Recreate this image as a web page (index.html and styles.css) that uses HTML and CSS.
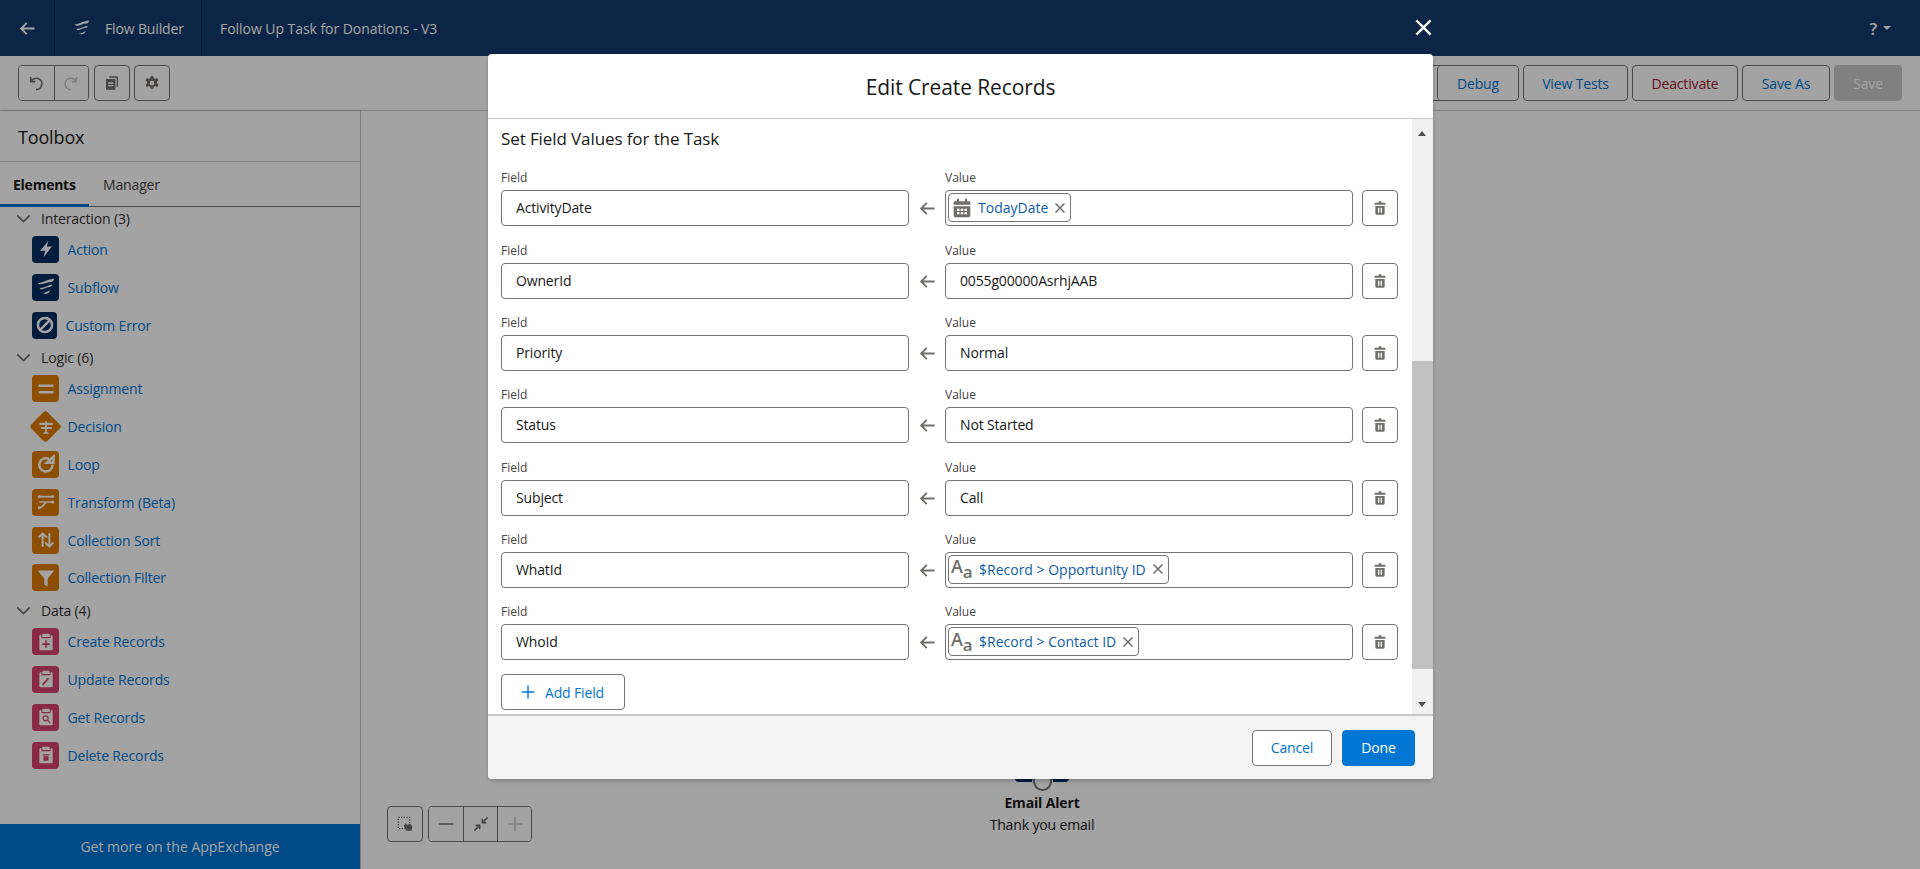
FILE: index.html
```html
<!DOCTYPE html>
<html lang="en">
<head>
    <meta charset="UTF-8">
    <title>Flow Builder</title>
    <link rel="stylesheet" href="styles.css">
</head>
<body>

<svg class="defs" width="0" height="0">
    <symbol id="i-flow" viewBox="0 0 24 24"><path d="M2 7c5 1 9-4 20-5-1 2-2 4-4 4-5 0-9 3-14 3zM4 13c5 1 9-3 16-4-1 2-2 3-4 3-4 0-7 3-10 3zM8 19c3 1 6-2 9-3-1 2-2 4-4 4-2 1-4 0-5-1z"/></symbol>
    <symbol id="i-trash" viewBox="0 0 24 24"><path d="M10 2h4v2h6v3H4V4h6zM5 9h14v11a2 2 0 0 1-2 2H7a2 2 0 0 1-2-2zm4 2.500v7.500h2v-7.500zm4 0v7.500h2v-7.500z" fill-rule="evenodd"/></symbol>
    <symbol id="i-close" viewBox="0 0 24 24"><path d="M3 3l18 18M21 3L3 21" fill="none" stroke="currentColor" stroke-width="3"/></symbol>
    <symbol id="i-arrow" viewBox="0 0 24 24"><path d="M22 12H3M11 4l-8 8 8 8" fill="none" stroke="currentColor" stroke-width="2.600"/></symbol>
    <symbol id="i-chevron" viewBox="0 0 24 24"><path d="M2 7l10 10L22 7" fill="none" stroke="currentColor" stroke-width="2.600"/></symbol>
    <symbol id="i-plus" viewBox="0 0 24 24"><path d="M12 1v22M1 12h22" fill="none" stroke="currentColor" stroke-width="2.400"/></symbol>
    <symbol id="i-clip" viewBox="0 0 24 24"><path d="M9 2h6a1.500 1.500 0 0 1 1.500 1.500V6h-9V3.500A1.500 1.500 0 0 1 9 2zM5 4h1.500v3.500h11V4H19a1 1 0 0 1 1 1v16a1 1 0 0 1-1 1H5a1 1 0 0 1-1-1V5a1 1 0 0 1 1-1z"/></symbol>
</svg>

<!-- Шапка -->
<header class="topbar">
    <div class="top-cell back-cell"><svg class="back-icon"><use href="#i-arrow"/></svg></div>
    <div class="top-cell app-cell">
        <svg class="flow-logo"><use href="#i-flow"/></svg>
        <span>Flow Builder</span>
    </div>
    <div class="top-cell flow-name">Follow Up Task for Donations - V3</div>
    <div class="help"><span>?</span><i class="caret"></i></div>
</header>

<!-- Панель инструментов -->
<div class="toolbar">
    <div class="tool-left">
        <div class="btn-group">
            <button class="icon-btn"><svg viewBox="0 0 24 24"><path d="M4 3v7h7M4.500 10A8.500 8.500 0 1 1 12 22" fill="none" stroke="currentColor" stroke-width="2.400"/></svg></button>
            <button class="icon-btn off"><svg viewBox="0 0 24 24"><path d="M20 3v7h-7M19.500 10A8.500 8.500 0 1 0 12 22" fill="none" stroke="currentColor" stroke-width="2.400"/></svg></button>
        </div>
        <button class="icon-btn single"><svg viewBox="0 0 24 24"><path d="M8 2h13v16h-2V4H8zM3 6h14v16H3zm3 5v2h8v-2zm0 4v2h8v-2z" fill="currentColor" fill-rule="evenodd"/></svg></button>
        <button class="icon-btn single"><svg viewBox="0 0 24 24"><path d="M10 2h4l.7 3 2.300 1 2.700-1.500 2 3.500-2.200 2v2.500l2.200 2-2 3.500-2.700-1.500-2.300 1-.7 3h-4l-.7-3-2.300-1-2.700 1.500-2-3.500 2.200-2V10l-2.200-2 2-3.500L7 6l2.300-1zM12 8.500a3.500 3.500 0 1 0 0 7 3.500 3.500 0 0 0 0-7z" fill="currentColor" fill-rule="evenodd"/></svg></button>
    </div>
    <div class="tool-right">
        <div class="btn-group">
            <button class="text-btn run">Run</button>
            <button class="text-btn debug">Debug</button>
        </div>
        <button class="text-btn tests">View Tests</button>
        <button class="text-btn danger">Deactivate</button>
        <button class="text-btn save-as">Save As</button>
        <button class="text-btn disabled">Save</button>
    </div>
</div>

<div class="main">
    <!-- Левая панель -->
    <aside class="toolbox">
        <div class="toolbox-title">Toolbox</div>
        <div class="tabs">
            <div class="tab active">Elements</div>
            <div class="tab">Manager</div>
        </div>
        <div class="tree">
            <div class="sec-head"><svg class="chev"><use href="#i-chevron"/></svg>Interaction (3)</div>
            <div class="item"><span class="ic navy"><svg viewBox="0 0 24 24"><path d="M15 2L5 14h6l-2 8 10-13h-6z"/></svg></span>Action</div>
            <div class="item"><span class="ic navy"><svg viewBox="0 0 24 24"><use href="#i-flow"/></svg></span>Subflow</div>
            <div class="item err"><span class="ic navy"><svg viewBox="0 0 24 24"><path d="M12 3.500a8.500 8.500 0 1 0 0 17 8.500 8.500 0 0 0 0-17zM6.500 17.500L17.500 6.500" fill="none" stroke="currentColor" stroke-width="3"/></svg></span>Custom Error</div>

            <div class="sec-head"><svg class="chev"><use href="#i-chevron"/></svg>Logic (6)</div>
            <div class="item"><span class="ic orange"><svg viewBox="0 0 24 24"><path d="M3 6.500h18v3H3zM3 14.500h18v3H3z"/></svg></span>Assignment</div>
            <div class="item"><span class="ic diamond"><svg viewBox="0 0 24 24"><path d="M4 7h16v2.500H4zM6 12h13v2.500H6zM11 5h2v12h-2zM8 20l4-3.500 4 3.500z"/></svg></span>Decision</div>
            <div class="item"><span class="ic orange"><svg viewBox="0 0 24 24"><path d="M20 13a8 8 0 1 1-4.500-7.200M13 10.500h8V3z" fill="none" stroke="currentColor" stroke-width="3"/></svg></span>Loop</div>
            <div class="item"><span class="ic orange"><svg viewBox="0 0 24 24"><path d="M4 5.500h16M4 12h16M13 12c-3 0-3 6-9 7" fill="none" stroke="currentColor" stroke-width="2"/><circle cx="4" cy="5.500" r="1.800"/><circle cx="20" cy="5.500" r="1.800"/><circle cx="20" cy="12" r="1.800"/><circle cx="4" cy="19" r="1.800"/></svg></span>Transform (Beta)</div>
            <div class="item"><span class="ic orange"><svg viewBox="0 0 24 24"><path d="M8 20V5M3 9l5-5 5 5M16 4v15M11 15l5 5 5-5" fill="none" stroke="currentColor" stroke-width="2.400"/></svg></span>Collection Sort</div>
            <div class="item"><span class="ic orange"><svg viewBox="0 0 24 24"><path d="M2 3h20l-8 10v9l-4-2v-7z"/></svg></span>Collection Filter</div>

            <div class="sec-head"><svg class="chev"><use href="#i-chevron"/></svg>Data (4)</div>
            <div class="item"><span class="ic pink"><svg viewBox="0 0 24 24"><use href="#i-clip"/><path class="mark" d="M12 10v9M7.500 14.500h9"/></svg></span>Create Records</div>
            <div class="item"><span class="ic pink"><svg viewBox="0 0 24 24"><use href="#i-clip"/><path class="mark" d="M8 19l7-8"/></svg></span>Update Records</div>
            <div class="item"><span class="ic pink"><svg viewBox="0 0 24 24"><use href="#i-clip"/><circle class="mark thin" cx="11.500" cy="13.500" r="3"/><path class="mark thin" d="M14 16l3 3"/></svg></span>Get Records</div>
            <div class="item"><span class="ic pink"><svg viewBox="0 0 24 24"><use href="#i-clip"/><path class="mark-fill" d="M8 11h8v1.500H8zM9 13.500h6V19H9z"/></svg></span>Delete Records</div>
        </div>
        <div class="appex">Get more on the AppExchange</div>
    </aside>

    <!-- Холст -->
    <div class="canvas">
        <div class="node">
            <div class="node-icon"><span class="node-dot"></span></div>
            <div class="node-name">Email Alert</div>
            <div class="node-sub">Thank you email</div>
        </div>
        <div class="canvas-tools">
            <button class="icon-btn single square"><svg viewBox="0 0 24 24"><path d="M2 2h17v17H2z" fill="none" stroke="currentColor" stroke-width="2" stroke-dasharray="2 2"/><path d="M10 15l3-4 2 2 5-1 3 3-1 7h-8z" fill="currentColor"/></svg></button>
            <div class="btn-group">
                <button class="icon-btn zoom"><svg viewBox="0 0 24 24"><path d="M1 12h22" stroke="currentColor" stroke-width="2.600"/></svg></button>
                <button class="icon-btn zoom"><svg viewBox="0 0 24 24"><path d="M22 2l-7 7M14 4v6h6M2 22l7-7M4 14h6v6" fill="none" stroke="currentColor" stroke-width="2.400"/></svg></button>
                <button class="icon-btn zoom off"><svg viewBox="0 0 24 24"><use href="#i-plus"/></svg></button>
            </div>
        </div>
    </div>
</div>

<!-- Затемнение и модальное окно -->
<div class="overlay">
    <div class="modal-wrap">
        <svg class="modal-close"><use href="#i-close"/></svg>
        <div class="modal">
            <div class="modal-head">Edit Create Records</div>
            <div class="modal-body">
                <div class="modal-scroll">
                    <h2 class="set-title">Set Field Values for the Task</h2>
                    <div class="rows">
                        <div class="row">
                            <div class="col field-col"><label>Field</label><div class="input">ActivityDate</div></div>
                            <svg class="row-arrow"><use href="#i-arrow"/></svg>
                            <div class="col value-col"><label>Value</label>
                                <div class="input pilled"><span class="pill">
                                    <svg class="cal" viewBox="0 0 24 24"><path d="M6 1h2.500v3h7V1H18v3h3a1 1 0 0 1 1 1v3H2V5a1 1 0 0 1 1-1h3zM2 10h20v11a2 2 0 0 1-2 2H4a2 2 0 0 1-2-2zm4 3v2.500h3V13zm4.500 0v2.500h3V13zm4.500 0v2.500h3V13zm-9 4v2.500h3V17zm4.500 0v2.500h3V17zm4.500 0v2.500h3V17z" fill-rule="evenodd"/></svg>
                                    <span class="pill-text">TodayDate</span><svg class="pill-x"><use href="#i-close"/></svg>
                                </span></div>
                            </div>
                            <button class="del"><svg><use href="#i-trash"/></svg></button>
                        </div>
                        <div class="row">
                            <div class="col field-col"><label>Field</label><div class="input">OwnerId</div></div>
                            <svg class="row-arrow"><use href="#i-arrow"/></svg>
                            <div class="col value-col"><label>Value</label><div class="input">0055g00000AsrhjAAB</div></div>
                            <button class="del"><svg><use href="#i-trash"/></svg></button>
                        </div>
                        <div class="row">
                            <div class="col field-col"><label>Field</label><div class="input">Priority</div></div>
                            <svg class="row-arrow"><use href="#i-arrow"/></svg>
                            <div class="col value-col"><label>Value</label><div class="input">Normal</div></div>
                            <button class="del"><svg><use href="#i-trash"/></svg></button>
                        </div>
                        <div class="row">
                            <div class="col field-col"><label>Field</label><div class="input">Status</div></div>
                            <svg class="row-arrow"><use href="#i-arrow"/></svg>
                            <div class="col value-col"><label>Value</label><div class="input">Not Started</div></div>
                            <button class="del"><svg><use href="#i-trash"/></svg></button>
                        </div>
                        <div class="row">
                            <div class="col field-col"><label>Field</label><div class="input">Subject</div></div>
                            <svg class="row-arrow"><use href="#i-arrow"/></svg>
                            <div class="col value-col"><label>Value</label><div class="input">Call</div></div>
                            <button class="del"><svg><use href="#i-trash"/></svg></button>
                        </div>
                        <div class="row">
                            <div class="col field-col"><label>Field</label><div class="input">WhatId</div></div>
                            <svg class="row-arrow"><use href="#i-arrow"/></svg>
                            <div class="col value-col"><label>Value</label>
                                <div class="input pilled"><span class="pill">
                                    <span class="aa"><b>A</b><i>a</i></span>
                                    <span class="pill-text">$Record &gt; Opportunity ID</span><svg class="pill-x"><use href="#i-close"/></svg>
                                </span></div>
                            </div>
                            <button class="del"><svg><use href="#i-trash"/></svg></button>
                        </div>
                        <div class="row">
                            <div class="col field-col"><label>Field</label><div class="input">WhoId</div></div>
                            <svg class="row-arrow"><use href="#i-arrow"/></svg>
                            <div class="col value-col"><label>Value</label>
                                <div class="input pilled"><span class="pill">
                                    <span class="aa"><b>A</b><i>a</i></span>
                                    <span class="pill-text">$Record &gt; Contact ID</span><svg class="pill-x"><use href="#i-close"/></svg>
                                </span></div>
                            </div>
                            <button class="del"><svg><use href="#i-trash"/></svg></button>
                        </div>
                    </div>
                    <button class="add-field"><svg><use href="#i-plus"/></svg>Add Field</button>
                </div>
                <div class="scrollbar">
                    <i class="sb-up"></i>
                    <div class="sb-thumb"></div>
                    <i class="sb-down"></i>
                </div>
            </div>
            <div class="modal-foot">
                <button class="foot-btn cancel">Cancel</button>
                <button class="foot-btn done">Done</button>
            </div>
        </div>
    </div>
</div>

</body>
</html>
```

FILE: styles.css
```css
* {
    box-sizing: border-box;
}
html, body {
    margin: 0;
    height: 100%;
    overflow: hidden;
}
body {
    font-family: "Open Sans", "Liberation Sans", sans-serif;
    font-size: 14px;
    letter-spacing: -0.15px;
    color: #181818;
    background: #fff;
    display: flex;
    flex-direction: column;
}
button {
    font: inherit;
    letter-spacing: inherit;
    background: #fff;
    padding: 0;
    cursor: pointer;
}
.defs {
    position: absolute;
}

/* Шапка */
.topbar {
    height: 56px;
    background: #133a6e;
    color: #fff;
    display: flex;
    align-items: stretch;
    flex: none;
}
.top-cell {
    display: flex;
    align-items: center;
    border-right: 1px solid #0a2a50;
}
.back-cell {
    width: 55px;
    padding-left: 19px;
}
.back-icon {
    width: 17px;
    height: 17px;
}
.app-cell {
    width: 147px;
    padding-left: 18px;
    gap: 14px;
}
.flow-logo {
    width: 18px;
    height: 18px;
    fill: #fff;
}
.flow-name {
    border: 0;
    padding-left: 18px;
    letter-spacing: -0.05px;
}
.help {
    margin-left: auto;
    margin-right: 29px;
    display: flex;
    align-items: center;
    gap: 6px;
    font-size: 17px;
    font-weight: 600;
}
.caret {
    border: 4px solid transparent;
    border-top: 4px solid #fff;
    margin-top: 3px;
}

/* Панель инструментов */
.toolbar {
    height: 55px;
    flex: none;
    border-bottom: 1px solid #c9c9c9;
    padding: 9px 18px 0;
    display: flex;
    justify-content: space-between;
    background: #fff;
}
.tool-left, .tool-right {
    display: flex;
    gap: 4px;
}
.tool-left {
    gap: 4.5px;
}
.btn-group {
    display: flex;
    border: 1px solid #747474;
    border-radius: 4px;
    height: 36px;
    overflow: hidden;
    background: #fff;
}
.btn-group button {
    border: 0;
    border-left: 1px solid #747474;
    height: 34px;
}
.btn-group button:first-child {
    border-left: 0;
}
.icon-btn {
    width: 34.5px;
    height: 36px;
    color: #706e6b;
    display: flex;
    align-items: center;
    justify-content: center;
}
.icon-btn svg {
    width: 16px;
    height: 16px;
}
.icon-btn.single {
    width: 36px;
    border: 1px solid #747474;
    border-radius: 4px;
}
.icon-btn.off {
    color: #c9c9c9;
}
.text-btn {
    height: 36px;
    border: 1px solid #747474;
    border-radius: 4px;
    color: #0176d3;
}
.run {
    width: 70px;
}
.debug {
    width: 81px;
}
.tests {
    width: 105px;
}
.danger {
    width: 106px;
    color: #a3122a;
}
.save-as {
    width: 88px;
}
.disabled {
    width: 68px;
    background: #c9c9c9;
    border-color: #c9c9c9;
    color: #fff;
}

/* Основная часть */
.main {
    flex: 1;
    display: flex;
    min-height: 0;
}
.toolbox {
    width: 361px;
    flex: none;
    display: flex;
    flex-direction: column;
    border-right: 1px solid #c9c9c9;
    box-shadow: 1px 0 3px rgba(0, 0, 0, 0.25);
    background: #fff;
}
.toolbox-title {
    height: 51px;
    padding: 14px 0 0 18px;
    font-size: 18px;
    line-height: 24px;
    border-bottom: 1px solid #c9c9c9;
    flex: none;
}
.tabs {
    display: flex;
    height: 45px;
    flex: none;
    border-bottom: 1px solid #747474;
}
.tab {
    padding: 13px 14px 0;
    height: 45px;
    color: #444;
}
.tab.active {
    font-weight: 700;
    color: #181818;
    border-bottom: 3px solid #0176d3;
    width: 89px;
    padding-left: 13px;
    letter-spacing: -0.25px;
}
.tree {
    flex: 1;
    margin-top: -1px;
}
.sec-head {
    height: 26px;
    display: flex;
    align-items: center;
    padding: 1px 0 0 16px;
    color: #333;
}
.sec-head:first-child {
    height: 24.6px;
    padding-top: 0;
}
.chev {
    width: 15px;
    height: 15px;
    margin-right: 10px;
    color: #706e6b;
}
.item {
    height: 37.8px;
    display: flex;
    align-items: center;
    padding-left: 32px;
    color: #0176d3;
    gap: 8.5px;
}
.ic {
    width: 27px;
    height: 27px;
    border-radius: 4px;
    display: flex;
    align-items: center;
    justify-content: center;
    color: #fff;
    flex: none;
}
.ic svg {
    width: 20px;
    height: 20px;
    fill: #fff;
}
.err .ic {
    width: 25px;
}
.navy {
    background: #032d60;
}
.orange {
    background: #dd7a01;
}
.pink {
    background: #d8406f;
}
.diamond {
    background: none;
    position: relative;
}
.diamond::before {
    content: "";
    position: absolute;
    inset: 2px;
    background: #dd7a01;
    border-radius: 3px;
    transform: rotate(45deg);
}
.diamond svg {
    position: relative;
}
.mark {
    fill: none;
    stroke: #d8406f;
    stroke-width: 2;
}
.mark.thin {
    stroke-width: 1.500;
}
.mark-fill {
    fill: #d8406f;
}
.appex {
    height: 45px;
    flex: none;
    background: #0176d3;
    color: #fff;
    text-align: center;
    line-height: 45px;
    letter-spacing: 0;
}

/* Холст */
.canvas {
    flex: 1;
    position: relative;
    background: #fff;
}
.node {
    position: absolute;
    left: 581px;
    top: 0;
    width: 200px;
    text-align: center;
    padding-top: 661px;
}
.node-icon {
    position: absolute;
    left: 73px;
    top: 620px;
    width: 54px;
    height: 51px;
    background: #032d60;
    border-radius: 4px;
}
.node-dot {
    position: absolute;
    left: 17.5px;
    bottom: -9px;
    width: 19px;
    height: 19px;
    border-radius: 50%;
    border: 2px solid #747474;
    background: #fff;
    box-shadow: 0 0 0 1px #fff;
}
.node-name {
    font-weight: 700;
    line-height: 18px;
    margin-top: 22px;
}
.node-sub {
    line-height: 18px;
    margin-top: 4px;
}
.canvas-tools {
    position: absolute;
    left: 26px;
    bottom: 27px;
    display: flex;
    gap: 5px;
}
.icon-btn.zoom {
    width: 34px;
}

/* Модальное окно */
.overlay {
    position: absolute;
    inset: 0;
    background: rgba(0, 0, 0, 0.36);
    display: flex;
    justify-content: center;
    padding: 54px 0 0 1px;
}
.modal-wrap {
    position: relative;
    width: 945px;
    height: 725px;
}
.modal-close {
    position: absolute;
    right: 0;
    top: -36px;
    width: 19px;
    height: 19px;
    color: #fff;
}
.modal {
    height: 100%;
    display: flex;
    flex-direction: column;
    background: #fff;
    border-radius: 4px;
    overflow: hidden;
    box-shadow: 0 2px 4px rgba(0, 0, 0, 0.2);
}
.modal-head {
    height: 65px;
    flex: none;
    border-bottom: 1px solid #c9c9c9;
    text-align: center;
    font-size: 21px;
    line-height: 66px;
    letter-spacing: -0.1px;
}
.modal-body {
    flex: 1;
    display: flex;
    min-height: 0;
}
.modal-scroll {
    flex: 1;
    padding: 0 13px;
    overflow: hidden;
}
.set-title {
    margin: 0;
    height: 35px;
    font-size: 17px;
    line-height: 39px;
    font-weight: 400;
    letter-spacing: -0.1px;
}
.row {
    height: 72.33px;
    padding-top: 0.33px;
    display: flex;
    align-items: flex-end;
}
.rows {
    height: 506.33px;
    margin-bottom: 14px;
}
.col {
    display: flex;
    flex-direction: column;
}
.col label {
    font-size: 12px;
    line-height: 18px;
    margin-bottom: 3px;
    color: #444;
    letter-spacing: 0;
}
.field-col {
    width: 408px;
}
.value-col {
    width: 408px;
}
.input {
    height: 36px;
    border: 1px solid #747474;
    border-radius: 4px;
    padding-left: 14px;
    line-height: 33px;
    background: #fff;
}
.input.pilled {
    padding: 2px 0 0 2px;
    line-height: normal;
}
.row-arrow {
    width: 17px;
    height: 17px;
    margin: 0 9px 9px 10px;
    color: #706e6b;
    flex: none;
}
.del {
    width: 36px;
    height: 36px;
    margin-left: 9px;
    border: 1px solid #747474;
    border-radius: 4px;
    display: flex;
    align-items: center;
    justify-content: center;
}
.del svg {
    width: 16px;
    height: 16px;
    fill: #706e6b;
}
.pill {
    display: inline-flex;
    align-items: center;
    height: 29px;
    border: 1px solid #747474;
    border-radius: 4px;
    padding: 0 3px 0 3px;
}
.cal {
    width: 20px;
    height: 20px;
    fill: #706e6b;
    margin-right: 6px;
}
.pill-text {
    color: #0b5cab;
    letter-spacing: 0;
}
.pill-x {
    width: 12px;
    height: 12px;
    margin: 0 1px 0 6px;
    color: #706e6b;
}
.aa {
    width: 24px;
    margin: 0 4px 0 -1px;
    color: #706e6b;
    display: flex;
    align-items: flex-end;
    line-height: 1;
}
.aa b {
    font-size: 18px;
    font-weight: 600;
    margin-top: -7px;
}
.aa i {
    font-size: 17px;
    font-style: normal;
    font-weight: 600;
    margin-bottom: -5px;
}
.add-field {
    width: 124px;
    height: 36px;
    border: 1px solid #747474;
    border-radius: 4px;
    color: #0176d3;
    display: flex;
    align-items: center;
    padding-left: 19px;
    gap: 10px;
}
.add-field svg {
    width: 14px;
    height: 14px;
}
.scrollbar {
    width: 21px;
    flex: none;
    background: #f1f1f1;
    position: relative;
}
.sb-up, .sb-down {
    position: absolute;
    left: 6px;
    border: 4px solid transparent;
}
.sb-up {
    top: 8px;
    border-bottom: 5px solid #505050;
}
.sb-down {
    bottom: 3px;
    border-top: 5px solid #505050;
}
.sb-thumb {
    position: absolute;
    left: 0;
    right: 0;
    top: 242px;
    height: 308px;
    background: #c1c1c1;
}
.modal-foot {
    height: 65px;
    flex: none;
    border-top: 2px solid #c9c9c9;
    background: #f3f3f3;
    display: flex;
    justify-content: flex-end;
    align-items: center;
    gap: 10px;
    padding: 0 18px 0 0;
}
.foot-btn {
    height: 36px;
    border-radius: 4px;
    border: 1px solid #747474;
}
.cancel {
    width: 80px;
    color: #0176d3;
}
.done {
    width: 73px;
    background: #0176d3;
    border-color: #0176d3;
    color: #fff;
}
```
